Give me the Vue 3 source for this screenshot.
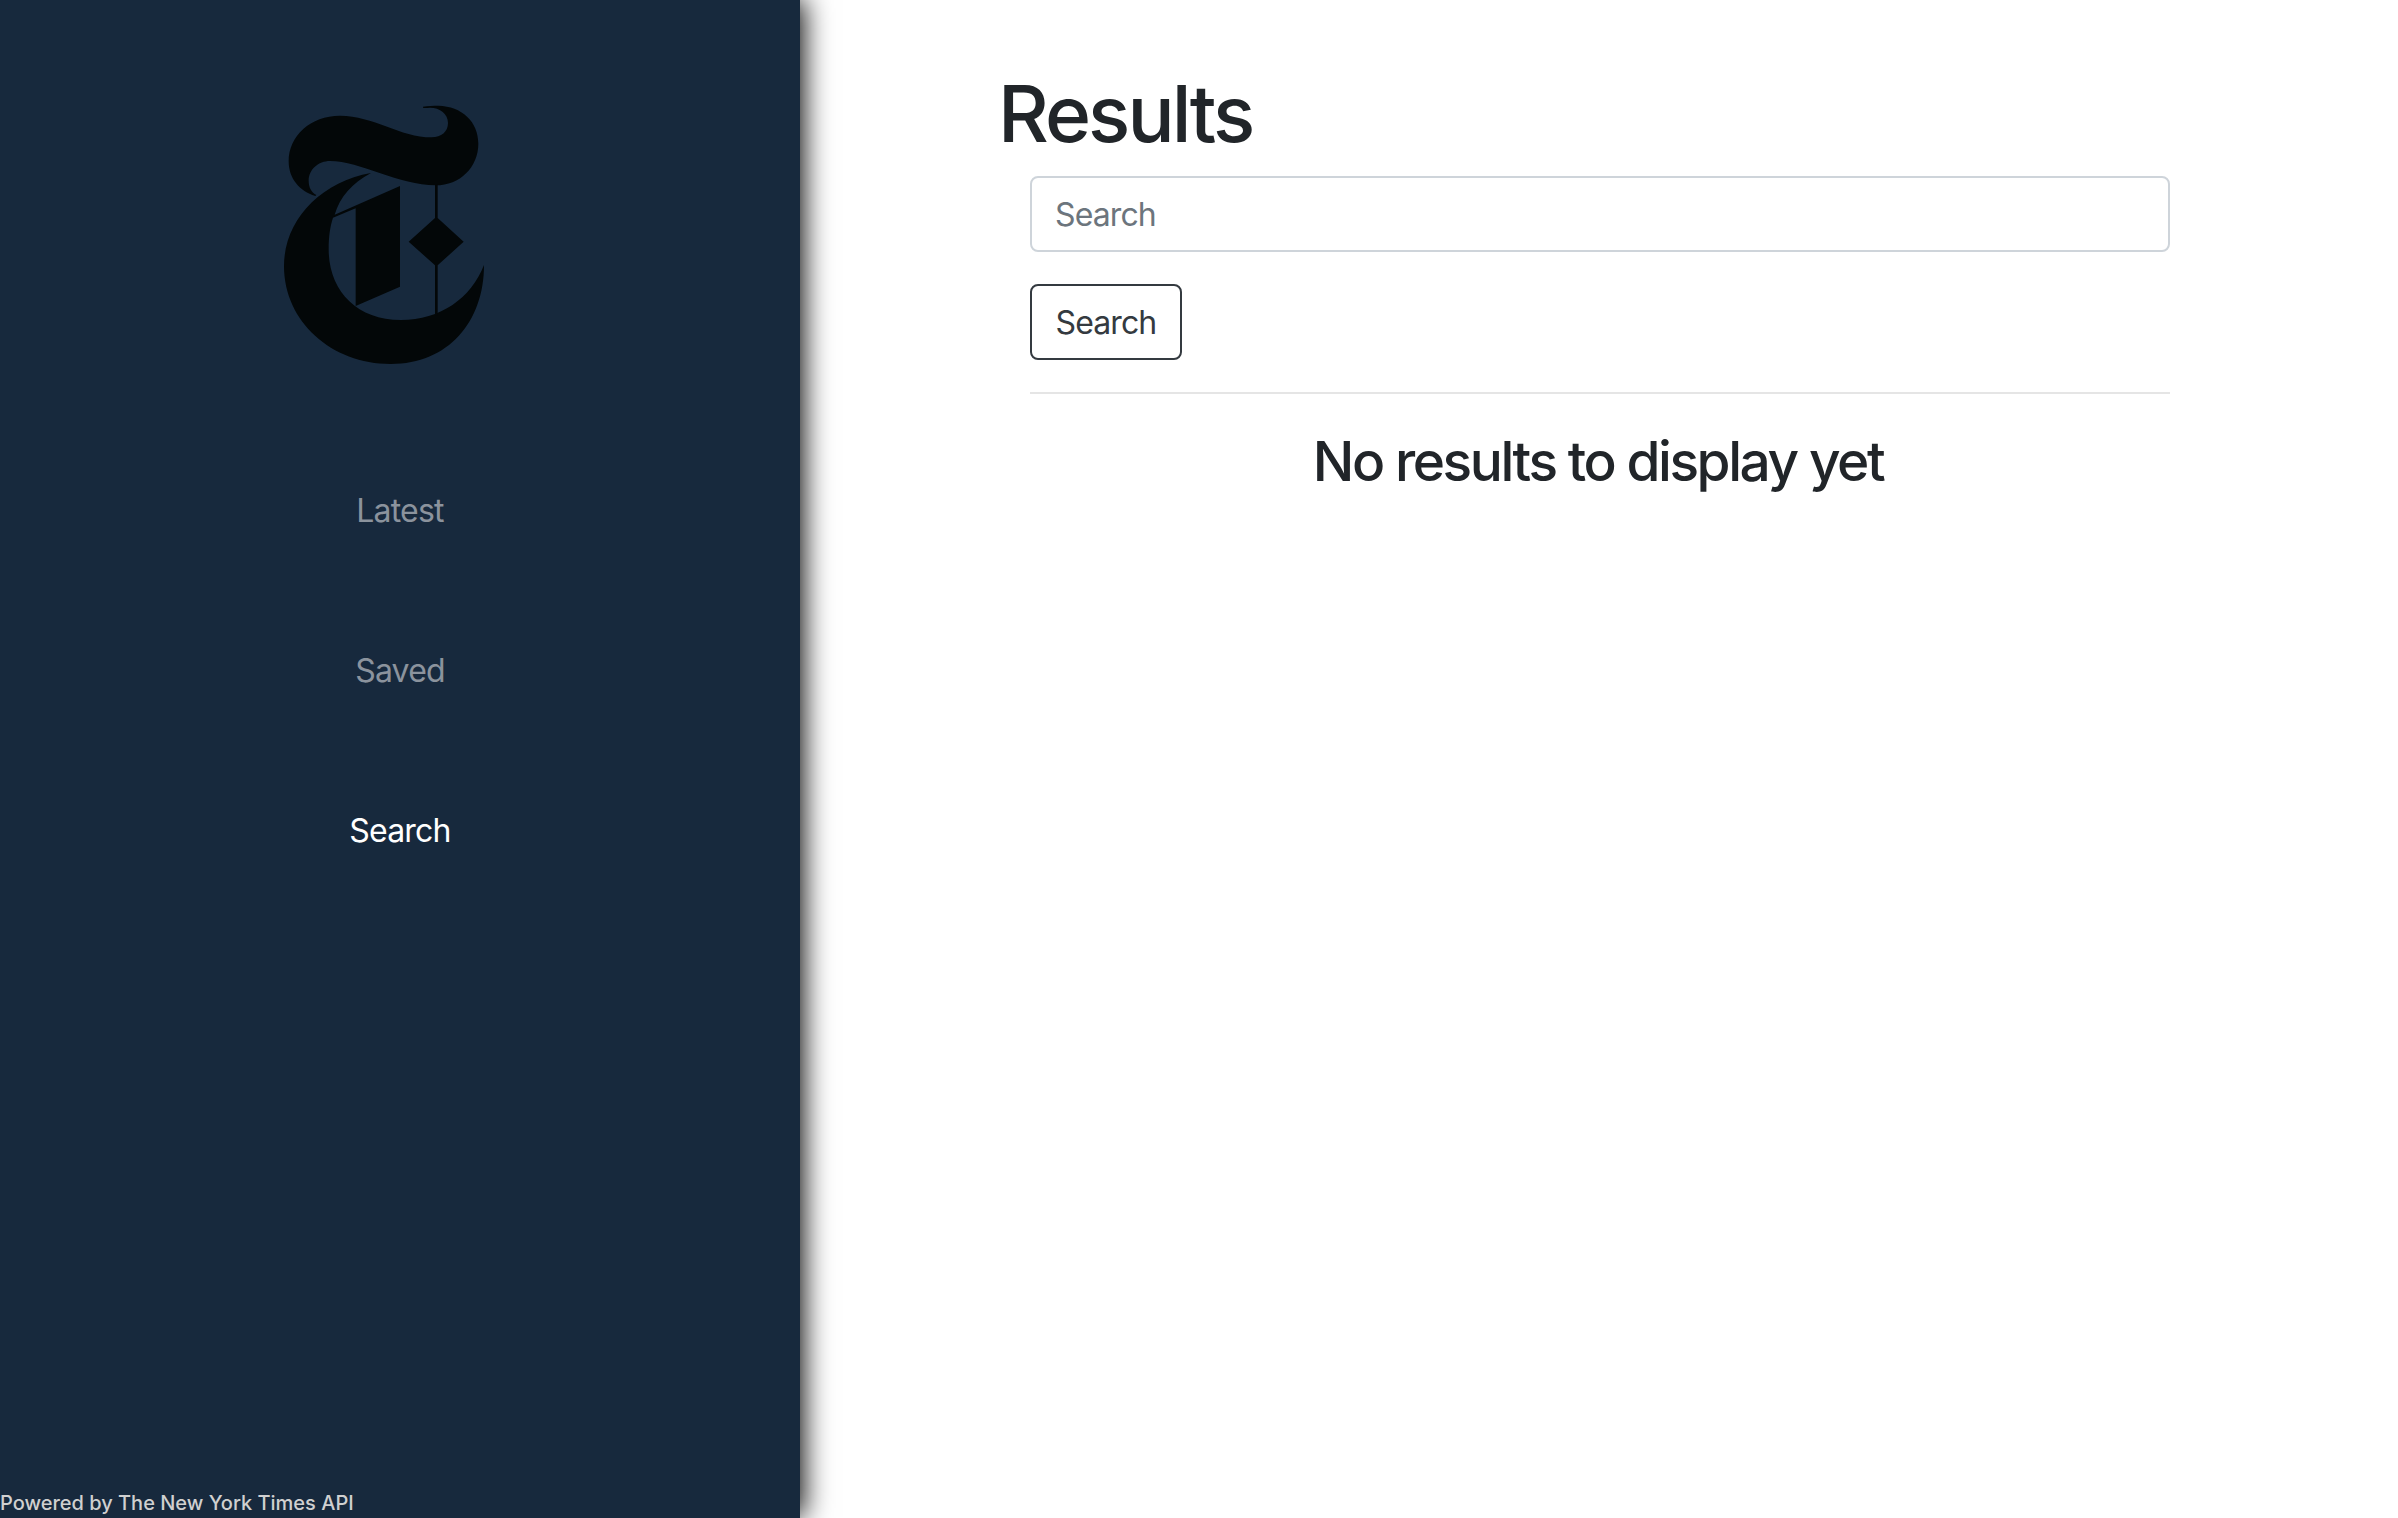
<script setup>
import { ref } from 'vue'

const links = ['Latest', 'Saved', 'Search']
const active = ref('Search')
const query = ref('')
</script>

<template>
  <div class="layout">
    <aside class="sidebar">
      <svg class="logo" viewBox="0 0 690 870" role="img" aria-label="The New York Times">
        <path d="M459 50C475 47 490 47 505 47C575 49 625 94 625 161C625 231 570 286 497 286C388 286 270 213 180 213C145 213 116 239 116 272C116 293 125 307 139 315L136 318C89 303 56 267 56 214C56 137 122 77 210 77C310 77 390 142 485 142C514 142 534 125 534 99C534 71 510 53 480 53C472 53 465 55 459 53Z" />
        <path d="M303 249C246 279 210 321 194 374L390 288V590L257 648V355L189 383C180 410 176 440 176 478C176 600 258 690 393 690C511 690 604 624 642 525C642 695 535 822 362 822C185 822 42 695 42 528C42 392 150 276 303 249Z" />
        <path d="M495 284H503V384L581 455L503 526V676H495V526L416 455L495 384Z" />
      </svg>
      <nav class="nav">
        <a
          v-for="link in links"
          :key="link"
          class="link"
          :class="{ active: link === active }"
          @click="active = link"
        >{{ link }}</a>
      </nav>
      <footer class="footer">Powered by The New York Times API</footer>
    </aside>
    <main class="main">
      <h1 class="title">Results</h1>
      <form class="form" @submit.prevent>
        <input v-model="query" class="input" type="text" placeholder="Search">
        <button class="button" type="submit">Search</button>
        <hr class="rule">
        <h3 class="empty">No results to display yet</h3>
      </form>
    </main>
  </div>
</template>

<style>
body {
  margin: 0;
  background: #fff;
}
</style>

<style scoped>
.layout {
  display: flex;
  height: 1518px;
  overflow: hidden;
  font-family: Inter, "Liberation Sans", sans-serif;
  font-size: 32px;
  line-height: 48px;
  color: #212529;
}
.sidebar {
  display: flex;
  flex-direction: column;
  flex: none;
  width: 800px;
  height: 1518px;
  background: #17293d;
  box-shadow: 3px -1px 27px #000;
}
.logo {
  flex: none;
  width: 230px;
  height: 290px;
  margin: 90px 0 0 270px;
  fill: #030708;
}
.nav {
  display: flex;
  flex-direction: column;
  align-items: center;
  gap: 112px;
  margin-top: 107px;
}
.link {
  color: #8b939d;
  letter-spacing: -0.8px;
  cursor: pointer;
}
.link.active {
  color: #fff;
}
.footer {
  margin-top: auto;
  font-size: 20px;
  line-height: 30px;
  font-weight: 500;
  color: #d0d0d0;
}
.main {
  flex: 1;
  padding: 66px 228px 0 198px;
}
.title {
  margin: 0;
  font-size: 78.5px;
  line-height: 96px;
  font-weight: 500;
  letter-spacing: -2.9px;
}
.form {
  display: flex;
  flex-direction: column;
  align-items: flex-start;
  margin: 14px 0 0 32px;
}
.input,
.button {
  box-sizing: border-box;
  height: 76px;
  padding: 0 23px;
  border: 2px solid #ced4da;
  border-radius: 8px;
  background: #fff;
  font: inherit;
  letter-spacing: -0.9px;
}
.input {
  width: 100%;
}
.input::placeholder {
  color: #6c757d;
  opacity: 1;
}
.button {
  width: 152px;
  margin-top: 32px;
  padding-top: 1px;
  border-color: #343a40;
  color: #343a40;
}
.rule {
  width: 100%;
  height: 2px;
  margin: 32px 0;
  border: 0;
  background: #e5e5e5;
}
.empty {
  width: 100%;
  margin: 0;
  padding-top: 2px;
  font-size: 55px;
  line-height: 67px;
  font-weight: 500;
  letter-spacing: -2.45px;
  text-indent: -4px;
  text-align: center;
}
</style>
